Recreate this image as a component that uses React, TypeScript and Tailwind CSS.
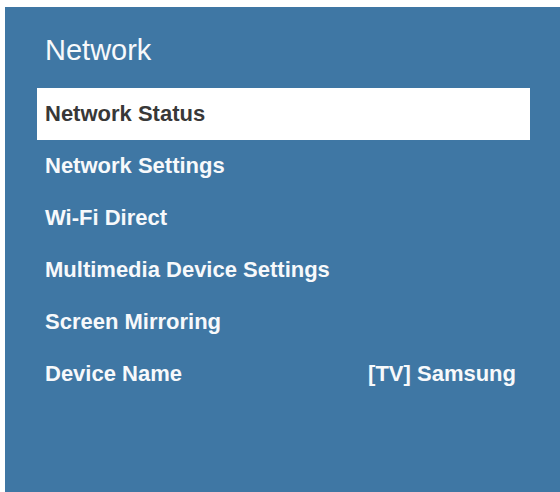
import React from "react";

const items = [
  { label: "Network Status" },
  { label: "Network Settings" },
  { label: "Wi-Fi Direct" },
  { label: "Multimedia Device Settings" },
  { label: "Screen Mirroring" },
  { label: "Device Name", value: "[TV] Samsung" },
];

export default function App() {
  const selected = 0;

  return (
    <div
      className="w-[560px] h-[492px] bg-white pt-[7px] pl-[5px]"
      style={{ fontFamily: '"Liberation Sans", Arial, sans-serif' }}
    >
      <div className="h-full bg-[#3f77a4] pl-[32px] pr-[30px]">
        <div className="h-[81px] pt-[29px] pl-[8px] text-[29px] leading-[29px] text-[#f7f9fb]">
          Network
        </div>
        <ul>
          {items.map((item, i) => (
            <li
              key={item.label}
              className={`flex h-[52px] items-center justify-between pl-[8px] pr-[14px] text-[22px] font-bold leading-[52px] ${
                i === selected ? "bg-white text-[#383838]" : "text-[#f7f9fb]"
              }`}
            >
              <span>{item.label}</span>
              {item.value && <span>{item.value}</span>}
            </li>
          ))}
        </ul>
      </div>
    </div>
  );
}
